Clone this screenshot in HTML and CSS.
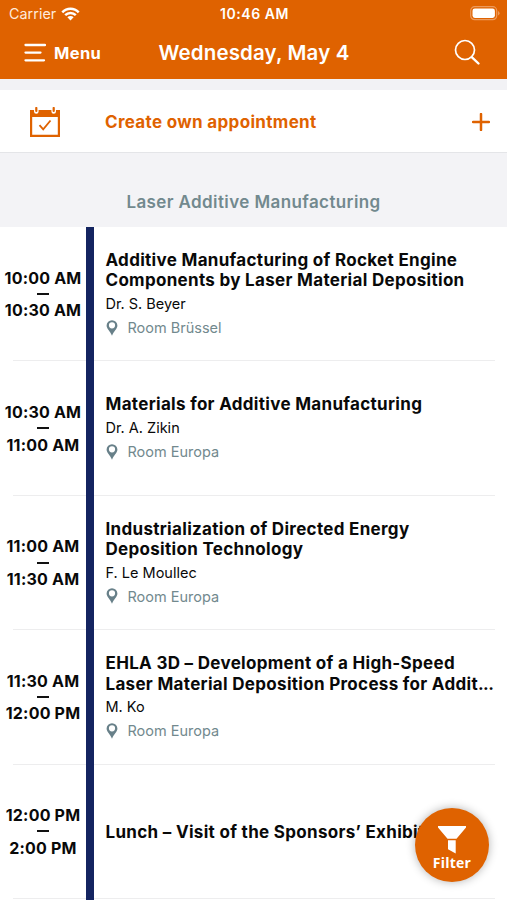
FILE: index.html
```html
<!DOCTYPE html>
<html lang="en">
<head>
<meta charset="utf-8">
<title>Wednesday, May 4</title>
<link rel="stylesheet" href="styles.css">
</head>
<body>
<svg class="defs" width="0" height="0" aria-hidden="true">
  <symbol id="pin" viewBox="0 0 12 16"><path fill-rule="evenodd" d="M6 .2A5.400 5.400 0 0 0 .6 5.600C.6 9 4 11 6 15.800 8 11 11.400 9 11.400 5.600A5.400 5.400 0 0 0 6 .2ZM6 2.200a3.100 3.100 0 1 1 0 6.200a3.100 3.100 0 0 1 0-6.200Z"/></symbol>
</svg>
<header class="header">
  <div class="status">
    <div class="carrier"><span>Carrier</span>
      <svg width="19" height="14" viewBox="0 0 19 14"><g fill="none" stroke="#fff" stroke-width="2.500"><path d="M1.300 5.300C5.900.5 13.100.5 17.700 5.300"/><path d="M4.200 8.200c3-3 7.600-3 10.600 0"/></g><path fill="#fff" d="M6.400 10.300a4.300 4.300 0 0 1 6.200 0L9.500 13.500Z"/></svg>
    </div>
    <div class="clock">10:46 AM</div>
    <svg class="battery" width="30" height="15" viewBox="0 0 30 15"><rect x=".7" y=".7" width="26" height="13" rx="4" fill="none" stroke="#ec9a5c" stroke-width="1.200"/><rect x="2.500" y="2.500" width="22.400" height="9.400" rx="2.300" fill="#fff"/><path d="M28 5v4.500q1.600-.7 1.600-2.250T28 5Z" fill="#ec9a5c"/></svg>
  </div>
  <div class="nav">
    <div class="menu">
      <svg width="23" height="20" viewBox="0 0 23 20"><path d="M2.500 2H22M2.500 9.600H17.500M2.500 17.300H21" stroke="#fff" stroke-width="2.300" stroke-linecap="round"/></svg>
      <span>Menu</span>
    </div>
    <h1>Wednesday, May 4</h1>
    <svg class="search" width="27" height="27" viewBox="0 0 27 27"><g fill="none" stroke="#fff" stroke-linecap="round"><circle cx="11" cy="11" r="9.500" stroke-width="1.700"/><path d="m18 18.300 6.500 6.200" stroke-width="2.400"/></g></svg>
  </div>
</header>
<section class="create">
  <svg class="calendar" width="30" height="30" viewBox="0 0 30 30"><path fill="#df6200" fill-rule="evenodd" d="M0 3H4v1.500a2.300 2.300 0 0 0 4.600 0V3H21.400v1.500a2.300 2.300 0 0 0 4.600 0V3H30V30H0ZM2.200 10v17.800H27.800V10Z"/><path d="M6.300 1v3M23.700 1v3" stroke="#df6200" stroke-width="2.200" stroke-linecap="round"/><path d="m9.500 18.200 3.700 4.200 7.300-8.900" fill="none" stroke="#df6200" stroke-width="1.800"/></svg>
  <span class="create-text">Create own appointment</span>
  <svg class="plus" width="18" height="18" viewBox="0 0 18 18"><path d="M9 1v16M1 9h16" stroke="#df6200" stroke-width="2.500" stroke-linecap="round"/></svg>
</section>
<h2 class="section">Laser Additive Manufacturing</h2>
<main class="agenda">
  <article class="row">
    <div class="time"><span>10:00 AM</span><i></i><span>10:30 AM</span></div>
    <div class="talk"><h3>Additive Manufacturing of Rocket Engine<br>Components by Laser Material Deposition</h3><p class="speaker">Dr. S. Beyer</p><p class="room"><svg width="12" height="16"><use href="#pin"/></svg><span>Room Brüssel</span></p></div>
  </article>
  <article class="row">
    <div class="time"><span>10:30 AM</span><i></i><span>11:00 AM</span></div>
    <div class="talk"><h3>Materials for Additive Manufacturing</h3><p class="speaker">Dr. A. Zikin</p><p class="room"><svg width="12" height="16"><use href="#pin"/></svg><span>Room Europa</span></p></div>
  </article>
  <article class="row">
    <div class="time"><span>11:00 AM</span><i></i><span>11:30 AM</span></div>
    <div class="talk"><h3>Industrialization of Directed Energy<br>Deposition Technology</h3><p class="speaker">F. Le Moullec</p><p class="room"><svg width="12" height="16"><use href="#pin"/></svg><span>Room Europa</span></p></div>
  </article>
  <article class="row">
    <div class="time"><span>11:30 AM</span><i></i><span>12:00 PM</span></div>
    <div class="talk"><h3>EHLA 3D – Development of a High-Speed<br>Laser Material Deposition Process for Addit<span class="dots">...</span></h3><p class="speaker">M. Ko</p><p class="room"><svg width="12" height="16"><use href="#pin"/></svg><span>Room Europa</span></p></div>
  </article>
  <article class="row">
    <div class="time"><span>12:00 PM</span><i></i><span>2:00 PM</span></div>
    <div class="talk single"><h3>Lunch – Visit of the Sponsors’ Exhibition</h3></div>
  </article>
</main>
<button class="filter">
  <svg width="28" height="28" viewBox="0 0 28 28"><path fill="#fff" d="M0 0H28V1.500L18.500 12.700H9.500L0 1.500ZM10 14.200H17.700V27.500L10 23.300Z"/></svg>
  <span>Filter</span>
</button>
</body>
</html>
```
FILE: styles.css
```css
* { box-sizing: border-box; margin: 0; padding: 0; }
html, body { height: 900px; overflow: hidden; }
body { width: 507px; background: #fff; font-family: Inter, "Liberation Sans", sans-serif; color: #090909; display: flex; flex-direction: column; position: relative; }
svg { display: block; flex: none; }
.defs { position: absolute; }
.header { height: 79px; flex: none; background: #df6200; color: #fff; }
.status { height: 27px; display: grid; grid-template-columns: 1fr auto 1fr; align-items: center; padding: 0 7px 0 9px; }
.carrier { display: flex; align-items: center; gap: 5px; font-size: 14.300px; color: #ffeadb; letter-spacing: .05px; }
.clock { font-size: 14px; font-weight: 600; letter-spacing: .55px; }
.battery { justify-self: end; }
.nav { height: 52px; display: grid; grid-template-columns: 1fr auto 1fr; align-items: center; padding: 0 26px 1px 23px; }
.menu { display: flex; align-items: center; gap: 8px; font-size: 16.500px; font-weight: 700; letter-spacing: .35px; }
h1 { font-size: 20.500px; line-height: 26px; font-weight: 600; letter-spacing: .15px; padding-left: 4px; }
.search { justify-self: end; }
.create { height: 74px; flex: none; border-top: 11px solid #f2f2f5; border-bottom: 1px solid #e4e5e8; display: flex; align-items: center; padding: 1px 17px 0 30px; color: #df6200; }
.calendar { margin-bottom: 0; }
.create-text { flex: 1; margin-left: 45px; font-size: 17px; font-weight: 700; letter-spacing: .33px; }
.section { height: 74px; flex: none; background: #f3f3f6; color: #72898e; font-size: 17px; line-height: 20px; font-weight: 600; letter-spacing: .4px; text-align: center; padding-top: 39px; }
.agenda { flex: 1; min-height: 0; overflow: hidden; background: linear-gradient(#142460, #142460) 86px 0 / 8px 100% no-repeat; }
.row { height: 134.400px; display: grid; grid-template-columns: 86px 1fr; column-gap: 19.500px; align-items: center; background: linear-gradient(#ededee, #ededee) 13px 100% / 73px 1px no-repeat, linear-gradient(#ededee, #ededee) 94px 100% / 401px 1px no-repeat; }
.time { display: flex; flex-direction: column; align-items: center; font-size: 16px; line-height: 20px; font-weight: 650; letter-spacing: .2px; white-space: nowrap; padding-bottom: .6px; }
.time i { width: 12px; height: 2px; margin: 5.300px 0; background: #111; }
.talk { white-space: nowrap; padding-bottom: 1px; }
.single { padding: 1px 0 0; }
h3 { font-size: 17px; line-height: 20.600px; font-weight: 650; letter-spacing: .31px; }
.dots { letter-spacing: -.6px; }
.speaker { font-size: 14.500px; line-height: 20px; margin-top: 3px; }
.room { display: flex; align-items: center; gap: 10px; height: 20px; margin-top: 3.600px; color: #72898e; font-size: 14.500px; }
.room svg { fill: #688089; }
.filter { position: absolute; right: 18px; bottom: 18px; width: 74px; height: 74px; border: 0; border-radius: 50%; background: #df6200; color: #fff; box-shadow: 0 0 10px rgba(0,0,0,.3); display: flex; flex-direction: column; align-items: center; padding-top: 18px; font: 700 14px/17px "Open Sans", sans-serif; letter-spacing: .25px; }
```
